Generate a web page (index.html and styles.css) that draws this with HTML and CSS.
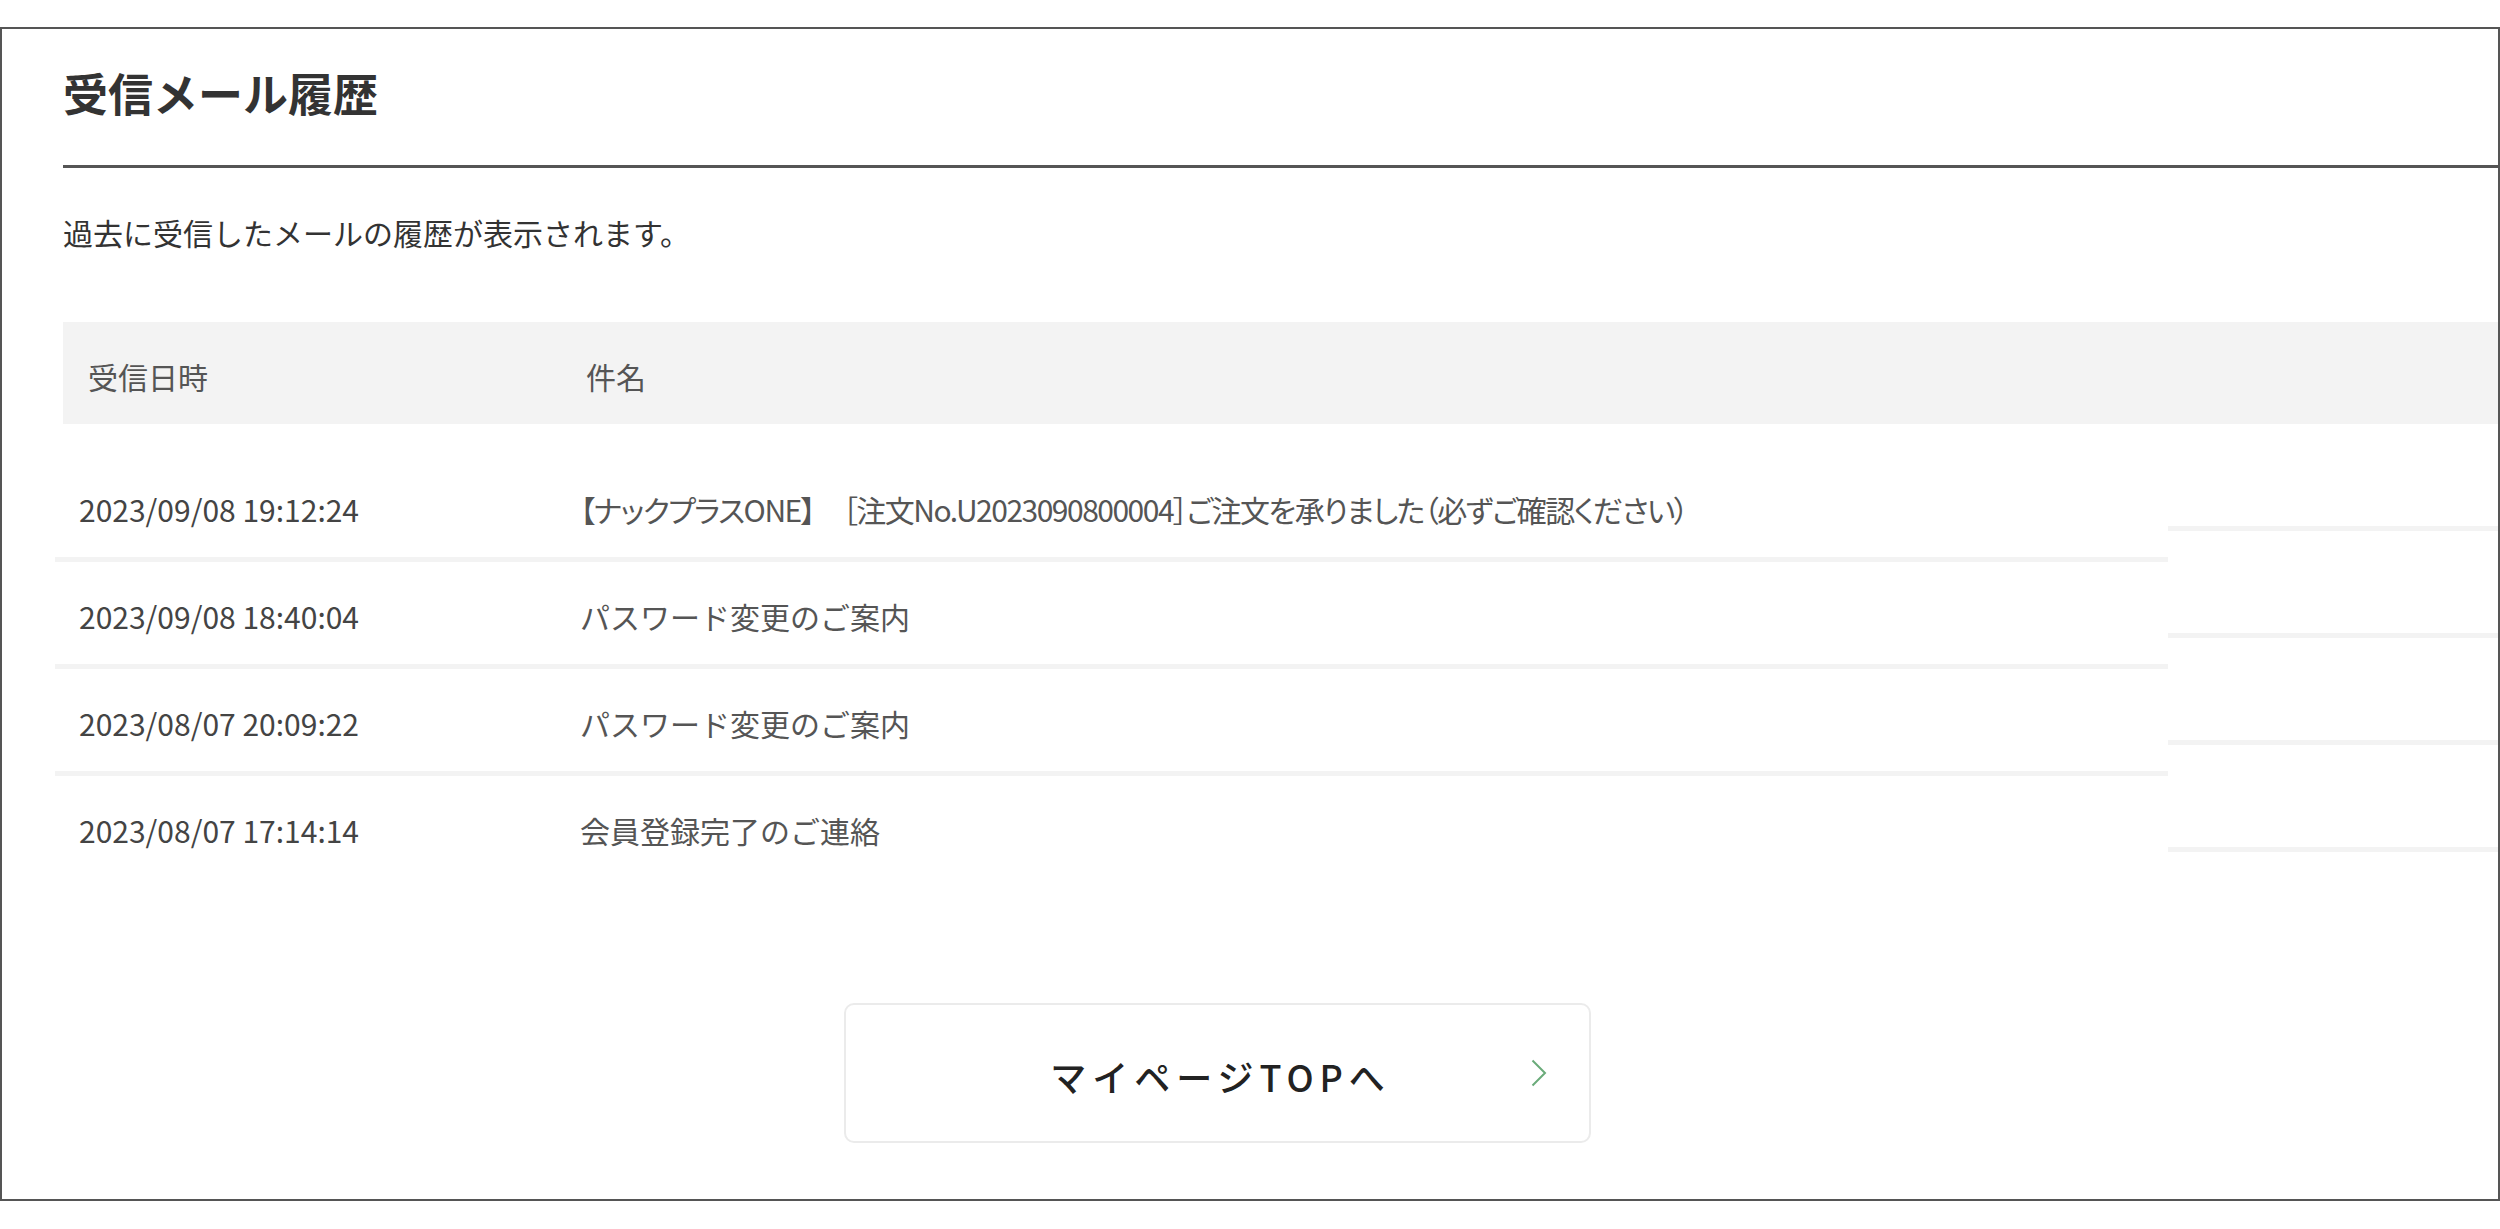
FILE: index.html
```html
<!DOCTYPE html>
<html lang="ja">
<head>
  <meta charset="UTF-8">
  <meta name="viewport" content="width=device-width, initial-scale=1.0">
  <title>受信メール履歴</title>
  <link rel="stylesheet" href="styles.css">
</head>
<body>
  <!-- Mail history panel -->
  <div class="panel">
    <h1 class="page-title">受信メール履歴</h1>
    <p class="lead">過去に受信したメールの履歴が表示されます。</p>

    <!-- Table header -->
    <div class="mail-head">
      <div class="col-date">受信日時</div>
      <div class="col-subject">件名</div>
    </div>

    <!-- Table body -->
    <div class="mail-body">
      <div class="mail-rows">
        <div class="mail-row">
          <div class="col-date">2023/09/08 19:12:24</div>
          <div class="col-subject compact">【ナックプラスONE】　［注文No.U2023090800004］ご注文を承りました（必ずご確認ください）</div>
        </div>
        <div class="mail-row">
          <div class="col-date">2023/09/08 18:40:04</div>
          <div class="col-subject">パスワード変更のご案内</div>
        </div>
        <div class="mail-row">
          <div class="col-date">2023/08/07 20:09:22</div>
          <div class="col-subject">パスワード変更のご案内</div>
        </div>
        <div class="mail-row">
          <div class="col-date">2023/08/07 17:14:14</div>
          <div class="col-subject">会員登録完了のご連絡</div>
        </div>
      </div>
      <div class="mail-side">
        <div class="side-cell"></div>
        <div class="side-cell"></div>
        <div class="side-cell"></div>
        <div class="side-cell"></div>
      </div>
    </div>

    <!-- Back button -->
    <div class="btn-area">
      <a href="mypage.html" class="btn-top">
        <span></span>
        <span class="btn-label">マイページTOPへ</span>
        <svg class="btn-arrow" width="16" height="28" viewBox="0 0 16 28">
          <polyline points="1.5,1.5 14,14 1.5,26.5" fill="none" stroke="#6aab7a" stroke-width="2"/>
        </svg>
      </a>
    </div>
  </div>
</body>
</html>
```

FILE: styles.css
```css
/* styles.css */

:root {
  --frame-color: #555;
  --line-color: #f3f3f3;
  --text-color: #333;
  --sub-text: #555;
}

body {
  margin: 0;
  font-family: "Noto Sans CJK JP", "Noto Sans", sans-serif;
  color: var(--text-color);
  background: #fff;
}

.panel {
  margin-top: 27px;
  width: 2500px;
  height: 1174px;
  box-sizing: border-box;
  border: 2px solid var(--frame-color);
  padding: 30px 0 0 61px;
}

.page-title {
  margin: 0;
  font-size: 45px;
  font-weight: 700;
  line-height: 1.5;
  color: #333;
  padding-bottom: 38px;
  border-bottom: 3px solid var(--frame-color);
}

.lead {
  margin: 42px 0 0;
  font-size: 30px;
  line-height: 1.5;
  color: #333;
}

/* Table */
.mail-head {
  display: flex;
  margin-top: 67px;
  height: 102px;
  box-sizing: border-box;
  padding-top: 32px;
  background-color: var(--line-color);
  font-size: 30px;
  line-height: 1.5;
  color: var(--sub-text);
}

.mail-head .col-date {
  width: 523px;
  box-sizing: border-box;
  padding-left: 25px;
}

.mail-body {
  display: flex;
  align-items: flex-start;
  margin-left: -8px;
}

.mail-rows {
  width: 2113px;
  padding-top: 31px;
}

.mail-row {
  display: flex;
  height: 102px;
  border-bottom: 5px solid var(--line-color);
  font-size: 30px;
  line-height: 1.5;
}

.mail-row:last-child {
  border-bottom: none;
}

.mail-row .col-date {
  width: 525px;
  box-sizing: border-box;
  padding: 32px 0 0 24px;
  color: #444;
}

.mail-row .col-subject {
  padding-top: 32px;
  color: var(--sub-text);
}

.mail-row .col-subject.compact {
  font-feature-settings: "palt";
  letter-spacing: -1.5px;
}

.mail-side {
  flex: 1;
}

.side-cell {
  height: 102px;
  border-bottom: 5px solid var(--line-color);
}

/* Button */
.btn-area {
  padding: 125px 0 0 781px;
}

.btn-top {
  display: grid;
  grid-template-columns: 1fr auto 1fr;
  align-items: center;
  width: 747px;
  height: 140px;
  box-sizing: border-box;
  border: 2px solid #ebebeb;
  border-radius: 10px;
  text-decoration: none;
  color: #222;
}

.btn-label {
  font-size: 36px;
  font-weight: 500;
  letter-spacing: 6px;
  margin-right: -6px;
  line-height: 1;
  padding-top: 6px;
}

.btn-arrow {
  justify-self: end;
  margin-right: 42px;
}
```
